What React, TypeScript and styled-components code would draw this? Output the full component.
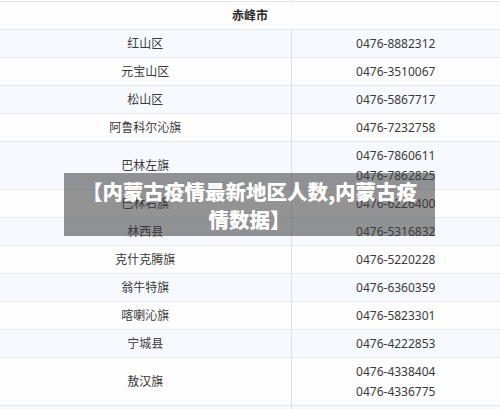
import styled, { createGlobalStyle } from 'styled-components';

const GlobalStyle = createGlobalStyle`
  html, body {
    margin: 0;
    padding: 0;
    background: #ffffff;
  }
  body {
    font-family: "Noto Sans", "Noto Sans CJK SC", sans-serif;
    width: 500px;
    height: 409px;
    overflow: hidden;
  }
`;

const Page = styled.div`
  position: relative;
  width: 500px;
  height: 409px;
  overflow: hidden;
`;

const Table = styled.table`
  width: 500px;
  border-collapse: collapse;
  table-layout: fixed;
  font-size: 12px;
  color: #3a3a3a;
`;

const Row = styled.tr<{ $alt?: boolean }>`
  background: ${(p) => (p.$alt ? '#f6f9fe' : '#fdfdfd')};
  border-bottom: 1px solid #e6e8ec;
`;

const Cut = styled.tr`
  height: 1px;
  border-bottom: 1px solid #e6e8ec;
  td {
    padding: 0;
    height: 1px;
  }
`;

const Cell = styled.td`
  padding: 4px 0 3px;
  line-height: 20px;
  text-align: center;
  vertical-align: middle;
  & + & {
    border-left: 1px solid #dcdfe4;
  }
`;

const HeadCell = styled.td`
  padding: 4px 0 3px;
  line-height: 20px;
  text-align: center;
  font-weight: bold;
  color: #2c2c2c;
`;

const Banner = styled.div`
  position: absolute;
  left: 64px;
  top: 173px;
  width: 371px;
  box-sizing: border-box;
  padding: 4px 16px 3px;
  background: rgba(60, 60, 60, 0.55);
  color: #ffffff;
  font-family: "Noto Sans CJK SC", sans-serif;
  font-weight: 900;
  font-size: 20.5px;
  line-height: 28px;
  text-align: center;
`;

const rows: { name: string; phones: string[] }[] = [
  { name: '红山区', phones: ['0476-8882312'] },
  { name: '元宝山区', phones: ['0476-3510067'] },
  { name: '松山区', phones: ['0476-5867717'] },
  { name: '阿鲁科尔沁旗', phones: ['0476-7232758'] },
  { name: '巴林左旗', phones: ['0476-7860611', '0476-7862825'] },
  { name: '巴林右旗', phones: ['0476-6226400'] },
  { name: '林西县', phones: ['0476-5316832'] },
  { name: '克什克腾旗', phones: ['0476-5220228'] },
  { name: '翁牛特旗', phones: ['0476-6360359'] },
  { name: '喀喇沁旗', phones: ['0476-5823301'] },
  { name: '宁城县', phones: ['0476-4222853'] },
  { name: '敖汉旗', phones: ['0476-4338404', '0476-4336775'] },
];

export default function App() {
  return (
    <Page>
      <GlobalStyle />
      <Table>
        <colgroup>
          <col style={{ width: 291 }} />
          <col />
        </colgroup>
        <tbody>
          <Cut>
            <Cell />
            <Cell />
          </Cut>
          <Row>
            <HeadCell colSpan={2}>赤峰市</HeadCell>
          </Row>
          {rows.map((r, i) => (
            <Row key={r.name} $alt={i % 2 === 0}>
              <Cell>{r.name}</Cell>
              <Cell>
                {r.phones.map((p) => (
                  <div key={p}>{p}</div>
                ))}
              </Cell>
            </Row>
          ))}
          <Row $alt>
            <Cell>&nbsp;</Cell>
            <Cell>&nbsp;</Cell>
          </Row>
        </tbody>
      </Table>
      <Banner>【内蒙古疫情最新地区人数,内蒙古疫情数据】</Banner>
    </Page>
  );
}
